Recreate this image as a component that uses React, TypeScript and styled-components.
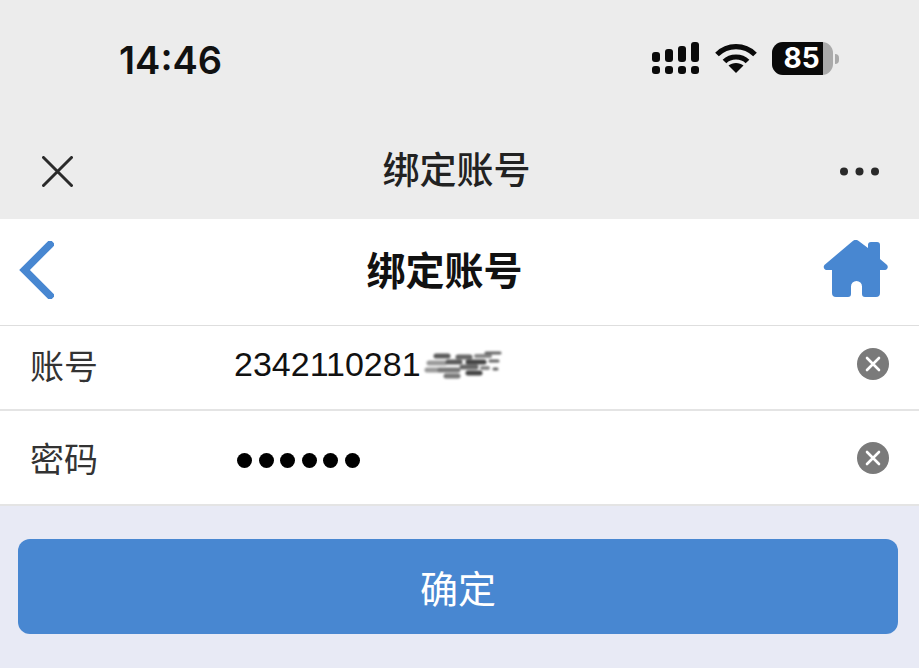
import styled, { createGlobalStyle } from "styled-components";

const GlobalStyle = createGlobalStyle`
  html, body {
    margin: 0;
    padding: 0;
    background: #e8eaf5;
  }
  body {
    font-family: "Liberation Sans", "Noto Sans CJK SC", sans-serif;
  }
`;

const Page = styled.div`
  width: 919px;
  height: 668px;
  overflow: hidden;
  background: #e8eaf5;
`;

const StatusBar = styled.div`
  height: 130px;
  box-sizing: border-box;
  padding: 42px 80px 0 119px;
  background: #ececec;
  display: flex;
  justify-content: space-between;
  align-items: flex-start;
`;

const Clock = styled.span`
  font-family: Inter, sans-serif;
  font-size: 38px;
  font-weight: 600;
  line-height: 36px;
  color: #111;
`;

const StatusIcons = styled.div`
  display: flex;
  align-items: flex-start;
  gap: 15.5px;
`;

const Battery = styled.div`
  width: 61px;
  height: 33px;
  border-radius: 11px;
  overflow: hidden;
  background: #aaa;
`;

const BatteryFill = styled.div`
  width: 51px;
  height: 33px;
  background: #0a0a0a;
  color: #fff;
  font-family: Inter, sans-serif;
  font-size: 28px;
  font-weight: 700;
  line-height: 33px;
  text-align: center;
  padding-left: 8px;
  box-sizing: border-box;
`;

const BatteryGroup = styled.div`
  display: flex;
  align-items: center;
  gap: 2px;
`;

const BatteryNub = styled.div`
  width: 4px;
  height: 10px;
  border-radius: 0 5px 5px 0;
  background: #aaa;
`;

const WechatBar = styled.div`
  height: 89px;
  box-sizing: border-box;
  padding: 0 40px 6px 42px;
  background: #ececec;
  display: flex;
  align-items: center;
`;

const WechatTitle = styled.div`
  flex: 1;
  text-align: center;
  font-size: 37px;
  line-height: 44px;
  font-weight: 500;
  color: #222;
`;

const Header = styled.div`
  height: 107px;
  box-sizing: border-box;
  padding: 0 31px 4px 19px;
  background: #fff;
  border-bottom: 1px solid #dedede;
  display: flex;
  align-items: center;
`;

const BackSlot = styled.div`
  width: 47px;
  display: flex;
`;

const HeaderTitle = styled.div`
  flex: 1;
  text-align: center;
  font-size: 39px;
  line-height: 46px;
  padding-top: 3px;
  font-weight: 700;
  color: #111;
`;

const HomeIcon = styled.svg`
  margin-bottom: 4px;
`;

const Row = styled.div<{ $height: number; $lift: number }>`
  height: ${({ $height }) => $height}px;
  box-sizing: border-box;
  padding: 0 30px ${({ $lift }) => $lift}px;
  background: #fff;
  border-bottom: 2px solid #e4e4e4;
  display: flex;
  align-items: center;
`;

const Label = styled.div`
  width: 204px;
  font-size: 34px;
  color: #333;
`;

const Value = styled.div`
  flex: 1;
  font-size: 34px;
  color: #111;
  display: flex;
  align-items: center;
`;

const Smudge = styled.svg`
  margin-left: 3px;
  filter: blur(1.2px);
`;

const PasswordDots = styled.div`
  flex: 1;
  display: flex;
  gap: 6.5px;
  padding: 5px 0 0 3px;
`;

const PasswordDot = styled.span`
  width: 15px;
  height: 15px;
  border-radius: 50%;
  background: #000;
`;

const ClearButton = styled.button`
  width: 32px;
  height: 32px;
  padding: 0;
  border: none;
  border-radius: 50%;
  background: #7a7a7a;
  display: flex;
  align-items: center;
  justify-content: center;
`;

const ActionArea = styled.div`
  padding: 33px 21px 0 18px;
`;

const ConfirmButton = styled.button`
  width: 100%;
  height: 95px;
  border: none;
  border-radius: 12px;
  background: #4887d1;
  color: #fff;
  font-family: "Liberation Sans", "Noto Sans CJK SC", sans-serif;
  font-size: 38px;
  cursor: pointer;
`;

function ClearIcon() {
  return (
    <svg width="18" height="18" viewBox="0 0 18 18">
      <path d="M3 3 15 15M15 3 3 15" stroke="#fff" strokeWidth="2.6" strokeLinecap="round" />
    </svg>
  );
}

export default function App() {
  return (
    <Page>
      <GlobalStyle />
      <StatusBar>
        <Clock>14:46</Clock>
        <StatusIcons>
          <svg width="47" height="33" viewBox="0 0 47 33" fill="#0a0a0a">
            <rect x="0" y="10" width="8" height="10" rx="3" />
            <rect x="13" y="7" width="8" height="13" rx="3" />
            <rect x="26" y="4" width="8" height="16" rx="3" />
            <rect x="39" y="0" width="8" height="20" rx="3" />
            <rect x="0" y="24" width="8" height="8" rx="3" />
            <rect x="13" y="24" width="8" height="8" rx="3" />
            <rect x="26" y="24" width="8" height="8" rx="3" />
            <rect x="39" y="24" width="8" height="8" rx="3" />
          </svg>
          <svg width="42" height="31" viewBox="0 0 42 31" fill="none" stroke="#0a0a0a" strokeWidth="5.2">
            <path d="M2 12.5C12.5 2 29.5 2 40 12.5" />
            <path d="M9.5 19.5C15.5 13.5 26.5 13.5 32.5 19.5" />
            <path d="M21 31 13.5 23.5C17.5 20 24.5 20 28.5 23.5Z" fill="#0a0a0a" stroke="none" />
          </svg>
          <BatteryGroup>
            <Battery>
              <BatteryFill>85</BatteryFill>
            </Battery>
            <BatteryNub />
          </BatteryGroup>
        </StatusIcons>
      </StatusBar>

      <WechatBar>
        <svg width="31" height="31" viewBox="0 0 31 31">
          <path d="M1.5 1.5 29.5 29.5M29.5 1.5 1.5 29.5" stroke="#2a2a2a" strokeWidth="3" strokeLinecap="round" />
        </svg>
        <WechatTitle>绑定账号</WechatTitle>
        <svg width="39" height="9" viewBox="0 0 39 9" fill="#2a2a2a">
          <circle cx="4" cy="4.5" r="4" />
          <circle cx="19.5" cy="4.5" r="4" />
          <circle cx="35" cy="4.5" r="4" />
        </svg>
      </WechatBar>

      <Header>
        <BackSlot>
          <svg width="35" height="58" viewBox="0 0 35 58">
            <path d="M31 3.5 5.500 29 31 54.500" fill="none" stroke="#4887d1" strokeWidth="7.5" strokeLinecap="square" />
          </svg>
        </BackSlot>
        <HeaderTitle>绑定账号</HeaderTitle>
        <HomeIcon width="65" height="57" viewBox="0 0 65 57" fill="#4887d1">
          <path d="M29.500 1.200a5 5 0 0 1 6.500 0L45 8V5a3 3 0 0 1 3-3h6a3 3 0 0 1 3 3v14l6.500 5.500c2.500 2.200 1 5.500-1.500 5.500h-5v23a4 4 0 0 1-4 4H42a3 3 0 0 1-3-3v-7.500a5.500 5.500 0 0 0-11 0V54a3 3 0 0 1-3 3H13a4 4 0 0 1-4-4V30H3.500c-2.500 0-4-3.300-1.500-5.500Z" />
        </HomeIcon>
      </Header>

      <Row $height={85} $lift={7}>
        <Label>账号</Label>
        <Value>
          2342110281
          <Smudge width="78" height="32" viewBox="0 0 78 32" aria-label="已涂抹">
            <g fill="none" strokeLinecap="round" strokeWidth="5">
              <path d="M5 15h16M3 22h12" stroke="#9a9a9a" />
              <path d="M12 8h12M24 14h12" stroke="#5a5a5a" />
              <path d="M16 22h18M22 28h12" stroke="#777" />
              <path d="M34 9h12M38 19h14" stroke="#666" />
              <path d="M44 14h16M44 25h12" stroke="#444" />
              <path d="M52 8h14M58 20h6" stroke="#888" strokeWidth="4" />
              <path d="M62 5h14M66 13h8M70 21h3" stroke="#666" strokeWidth="3" />
            </g>
          </Smudge>
        </Value>
        <ClearButton aria-label="清除账号">
          <ClearIcon />
        </ClearButton>
      </Row>
      <Row $height={95} $lift={0}>
        <Label>密码</Label>
        <PasswordDots>
          {[0, 1, 2, 3, 4, 5].map((i) => (
            <PasswordDot key={i} />
          ))}
        </PasswordDots>
        <ClearButton aria-label="清除密码">
          <ClearIcon />
        </ClearButton>
      </Row>

      <ActionArea>
        <ConfirmButton>确定</ConfirmButton>
      </ActionArea>
    </Page>
  );
}
